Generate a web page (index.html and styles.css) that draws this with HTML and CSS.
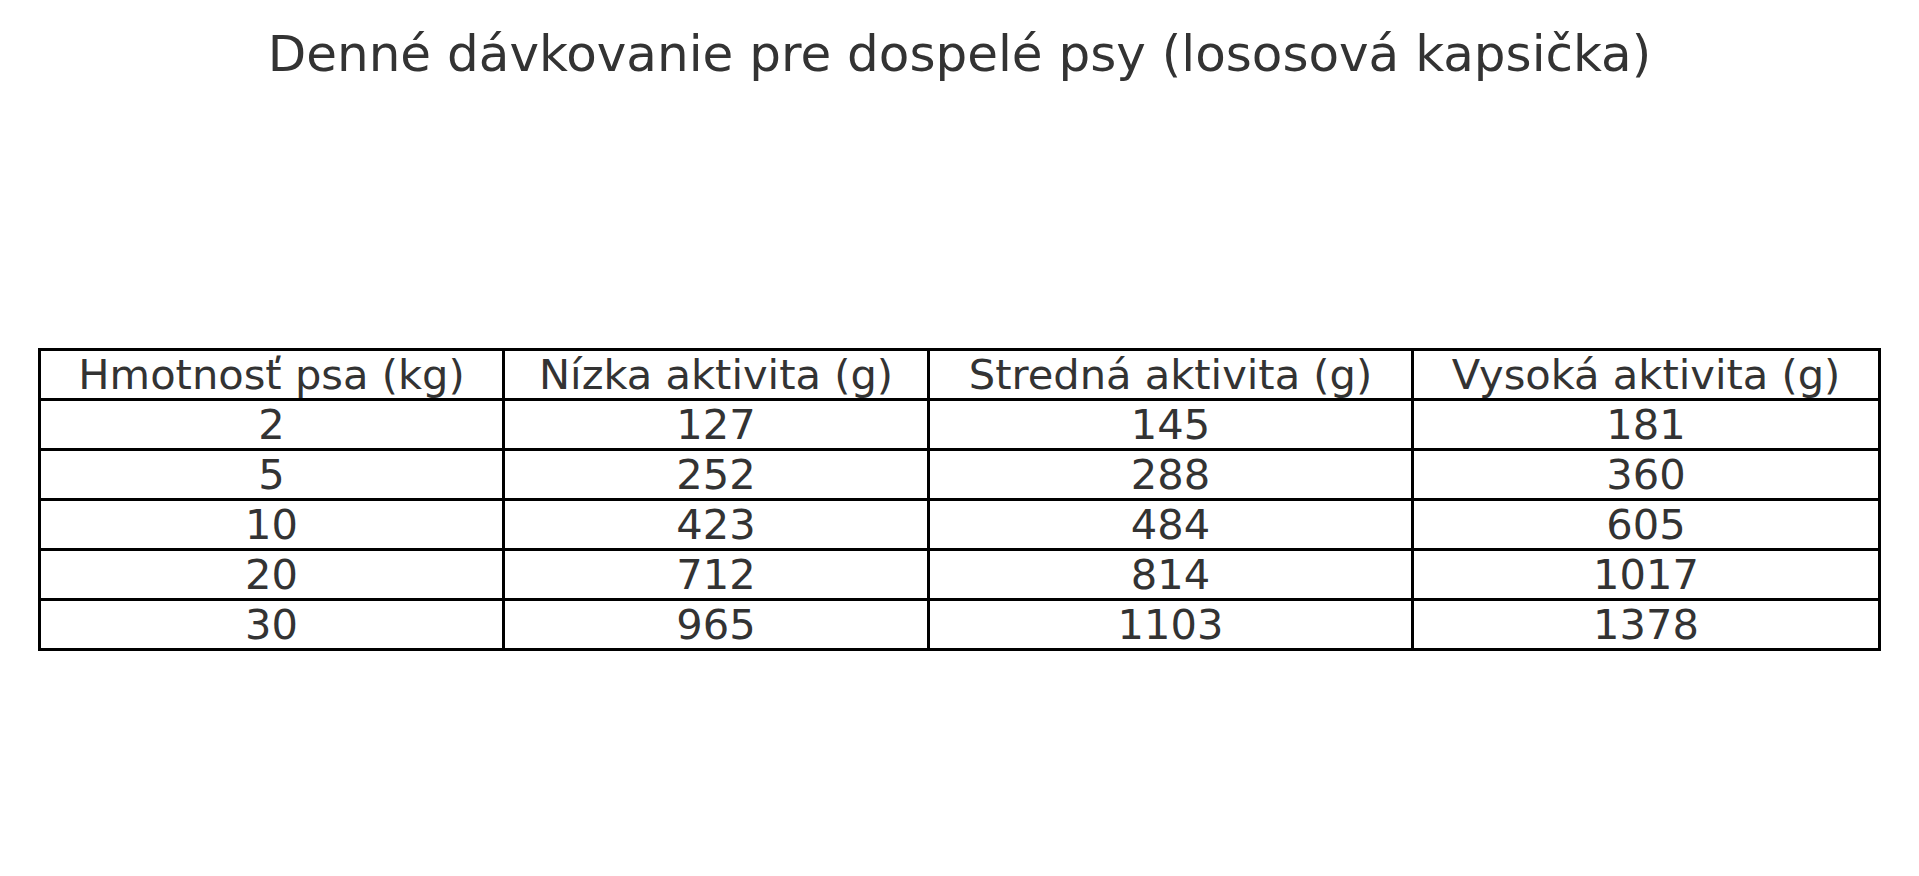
FILE: index.html
```html
<!DOCTYPE html>
<html lang="sk">
<head>
<meta charset="utf-8">
<title>Denné dávkovanie</title>
<link rel="stylesheet" href="styles.css">
</head>
<body>
<div class="page">
  <h1 class="title">Denné dávkovanie pre dospelé psy (lososová kapsička)</h1>
  <table class="dose">
    <colgroup>
      <col class="c1"><col class="c2"><col class="c3"><col class="c4">
    </colgroup>
    <tr><td>Hmotnosť psa (kg)</td><td>Nízka aktivita (g)</td><td>Stredná aktivita (g)</td><td>Vysoká aktivita (g)</td></tr>
    <tr><td>2</td><td>127</td><td>145</td><td>181</td></tr>
    <tr><td>5</td><td>252</td><td>288</td><td>360</td></tr>
    <tr><td>10</td><td>423</td><td>484</td><td>605</td></tr>
    <tr><td>20</td><td>712</td><td>814</td><td>1017</td></tr>
    <tr><td>30</td><td>965</td><td>1103</td><td>1378</td></tr>
  </table>
</div>
</body>
</html>
```

FILE: styles.css
```css
html, body {
  margin: 0;
  padding: 0;
  background: #ffffff;
}
.page {
  width: 1919px;
  height: 876px;
  font-family: "DejaVu Sans", sans-serif;
  color: #333333;
  overflow: hidden;
}
.title {
  margin: 0;
  padding-top: 26px;
  font-size: 50px;
  font-weight: normal;
  line-height: 56px;
  text-align: center;
}
.dose {
  margin-top: 266px;
  margin-left: 38px;
  width: 1840px;
  border-collapse: collapse;
  table-layout: fixed;
}
.c1 { width: 464px; }
.c2 { width: 425px; }
.c3 { width: 484px; }
.c4 { width: 467px; }
.dose td {
  border: 3px solid #000000;
  height: 47px;
  padding: 0;
  box-sizing: border-box;
  font-size: 41.6px;
  line-height: 47px;
  text-align: center;
  vertical-align: middle;
}
```
